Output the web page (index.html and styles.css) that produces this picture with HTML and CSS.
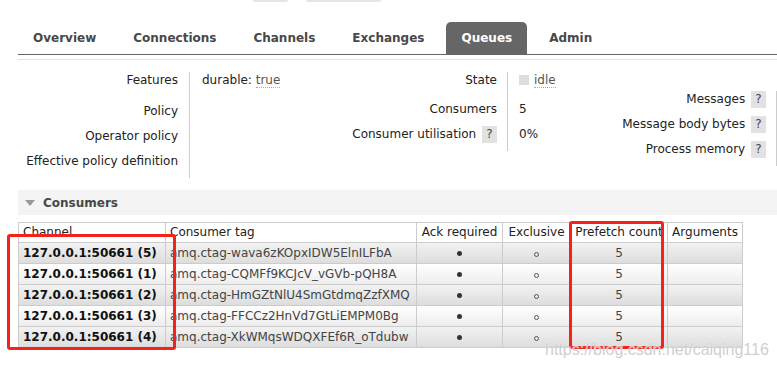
FILE: index.html
```html
<!DOCTYPE html>
<html lang="en">
<head>
    <meta charset="UTF-8">
    <meta name="viewport" content="width=device-width, initial-scale=1.0">
    <title>RabbitMQ Management - Queue</title>
    <link rel="stylesheet" href="styles.css">
</head>
<body>
    <div class="header">
        <span class="stub stub-short"></span>
        <span class="stub stub-long"></span>
    </div>
    <ul class="tabs">
        <li>Overview</li>
        <li>Connections</li>
        <li>Channels</li>
        <li>Exchanges</li>
        <li class="active">Queues</li>
        <li>Admin</li>
    </ul>
    <div class="subline"></div>

    <div class="details">
        <div class="props props-main">
            <div class="lbl">Features</div>
            <div class="val">durable: <abbr>true</abbr></div>
            <div class="lbl">Policy</div>
            <div class="val"></div>
            <div class="lbl">Operator policy</div>
            <div class="val"></div>
            <div class="lbl">Effective policy definition</div>
            <div class="val"></div>
        </div>
        <div class="props props-state">
            <div class="lbl">State</div>
            <div class="val"><span class="state-box"></span><abbr>idle</abbr></div>
            <div class="lbl">Consumers</div>
            <div class="val">5</div>
            <div class="lbl">Consumer utilisation <span class="help">?</span></div>
            <div class="val">0%</div>
        </div>
        <div class="props props-msgs">
            <div class="lbl">Messages <span class="help">?</span></div>
            <div class="val"></div>
            <div class="lbl">Message body bytes <span class="help">?</span></div>
            <div class="val"></div>
            <div class="lbl">Process memory <span class="help">?</span></div>
            <div class="val"></div>
        </div>
    </div>

    <div class="section">
        <h2 class="section-title"><span class="arrow"></span>Consumers</h2>
        <table class="list">
            <colgroup>
                <col class="c-channel">
                <col class="c-tag">
                <col class="c-ack">
                <col class="c-excl">
                <col class="c-prefetch">
                <col class="c-args">
            </colgroup>
            <thead>
                <tr>
                    <th class="left">Channel</th>
                    <th class="left">Consumer tag</th>
                    <th>Ack required</th>
                    <th>Exclusive</th>
                    <th>Prefetch count</th>
                    <th>Arguments</th>
                </tr>
            </thead>
            <tbody>
                <tr class="alt1">
                    <td class="channel">127.0.0.1:50661 (5)</td>
                    <td class="tag">amq.ctag-wava6zKOpxIDW5ElnILFbA</td>
                    <td><span class="dot"></span></td>
                    <td><span class="ring"></span></td>
                    <td>5</td>
                    <td></td>
                </tr>
                <tr class="alt2">
                    <td class="channel">127.0.0.1:50661 (1)</td>
                    <td class="tag">amq.ctag-CQMFf9KCJcV_vGVb-pQH8A</td>
                    <td><span class="dot"></span></td>
                    <td><span class="ring"></span></td>
                    <td>5</td>
                    <td></td>
                </tr>
                <tr class="alt1">
                    <td class="channel">127.0.0.1:50661 (2)</td>
                    <td class="tag">amq.ctag-HmGZtNlU4SmGtdmqZzfXMQ</td>
                    <td><span class="dot"></span></td>
                    <td><span class="ring"></span></td>
                    <td>5</td>
                    <td></td>
                </tr>
                <tr class="alt2">
                    <td class="channel">127.0.0.1:50661 (3)</td>
                    <td class="tag">amq.ctag-FFCCz2HnVd7GtLiEMPM0Bg</td>
                    <td><span class="dot"></span></td>
                    <td><span class="ring"></span></td>
                    <td>5</td>
                    <td></td>
                </tr>
                <tr class="alt1">
                    <td class="channel">127.0.0.1:50661 (4)</td>
                    <td class="tag">amq.ctag-XkWMqsWDQXFEf6R_oTdubw</td>
                    <td><span class="dot"></span></td>
                    <td><span class="ring"></span></td>
                    <td>5</td>
                    <td></td>
                </tr>
            </tbody>
        </table>
    </div>

    <div class="mark mark-channel"></div>
    <div class="mark mark-prefetch"></div>
    <div class="watermark">https://blog.csdn.net/caiqing116</div>
</body>
</html>
```

FILE: styles.css
```css
html, body {
    overflow: hidden;
}
body {
    font-family: 'DejaVu Sans', Verdana, sans-serif;
    font-size: 12px;
    color: #222;
    margin: 0;
    padding: 0;
    background: #fff;
    position: relative;
    height: 368px;
}
.header {
    height: 22px;
    display: flex;
    align-items: flex-start;
    padding-left: 253px;
    gap: 18px;
}
.stub {
    display: block;
    height: 2px;
    background: #e6e6e6;
    border-radius: 0 0 3px 3px;
}
.stub-short {
    width: 35px;
}
.stub-long {
    width: 75px;
}
.tabs {
    display: flex;
    list-style: none;
    margin: 0 0 0 18px;
    padding: 0;
    gap: 7px;
    border-bottom: 1px solid #666;
}
.tabs li {
    height: 31px;
    line-height: 31px;
    padding: 1px 15px 0;
    font-weight: bold;
    color: #484848;
    border-radius: 5px 5px 0 0;
}
.tabs li.active {
    background: #666;
    color: #fff;
}
.subline {
    margin: 4px 0 0 18px;
    height: 1px;
    background: #e2e2e2;
}
.details {
    display: flex;
    align-items: flex-start;
    margin-left: 18px;
    padding-top: 12px;
}
.props {
    display: grid;
    flex-shrink: 0;
    line-height: 17px;
}
.props-main {
    grid-template-columns: 172px 161px;
    grid-template-rows: 31px 25px 25px 25px;
}
.props-state {
    grid-template-columns: 157px 100px;
    grid-template-rows: 29px 25px 25px;
}
.props-msgs {
    margin-top: 19px;
    grid-template-columns: 169px 100px;
    grid-template-rows: 25px 25px 25px;
    padding-bottom: 4px;
}
.lbl {
    text-align: right;
    padding-right: 10px;
    border-right: 1px solid #ccc;
    white-space: nowrap;
}
.props-main .lbl {
    padding-right: 11px;
}
.val {
    padding-left: 12px;
    white-space: nowrap;
}
.props-state .val {
    padding-left: 11px;
}
abbr {
    text-decoration: none;
    border-bottom: 1px dotted #aaa;
    color: #555;
}
.state-box {
    display: inline-block;
    width: 10px;
    height: 10px;
    background: #ddd;
    margin-right: 5px;
    vertical-align: -1px;
}
.help {
    display: inline-block;
    width: 15px;
    height: 17px;
    line-height: 17px;
    text-align: center;
    background: #e2e2e2;
    color: #444;
    margin-left: 2px;
    vertical-align: top;
}
.section {
    margin: 12px 0 0 18px;
}
.section-title {
    margin: 0;
    height: 25px;
    display: flex;
    align-items: center;
    background: #f4f4f4;
    font-size: 12px;
    color: #484848;
    padding-left: 7px;
}
.arrow {
    width: 0;
    height: 0;
    border-left: 5px solid transparent;
    border-right: 5px solid transparent;
    border-top: 6px solid #999;
    margin-right: 8px;
}
.list {
    margin-top: 7px;
    border-collapse: collapse;
    table-layout: fixed;
    width: 725px;
}
.c-channel { width: 147px; }
.c-tag { width: 251px; }
.c-ack { width: 86px; }
.c-excl { width: 68px; }
.c-prefetch { width: 97px; }
.c-args { width: 75px; }
.list th, .list td {
    border: 1px solid #ccc;
    padding: 0 4px;
    height: 19px;
    line-height: 13px;
    text-align: center;
    white-space: nowrap;
    overflow: hidden;
}
.list th {
    font-weight: normal;
    color: #222;
    background: #fff;
}
.list th.left {
    text-align: left;
}
.list td {
    height: 20px;
    color: #444;
}
.list td.channel {
    text-align: left;
    font-weight: bold;
    color: #111;
}
.list td.tag {
    text-align: left;
}
.alt1 {
    background: linear-gradient(#f2f2f2, #dcdcdc);
}
.alt2 {
    background: linear-gradient(#fff, #ececec);
}
.dot, .ring {
    display: inline-block;
    width: 5px;
    height: 5px;
    border-radius: 50%;
    box-sizing: border-box;
}
.dot {
    background: #333;
    vertical-align: 1px;
}
.ring {
    border: 1px solid #555;
    vertical-align: 0;
}
.mark {
    position: absolute;
    box-sizing: border-box;
    border: 3px solid #f3221b;
    border-radius: 3px;
}
.mark-channel {
    left: 7px;
    top: 234px;
    width: 169px;
    height: 116px;
}
.mark-prefetch {
    left: 569px;
    top: 221px;
    width: 95px;
    height: 128px;
}
.watermark {
    position: absolute;
    left: 545px;
    top: 344px;
    line-height: 12px;
    font-family: 'Liberation Sans', Arial, sans-serif;
    font-size: 16px;
    color: rgba(190, 190, 190, 0.75);
    text-shadow: 0 0 1px #fff;
}
```
